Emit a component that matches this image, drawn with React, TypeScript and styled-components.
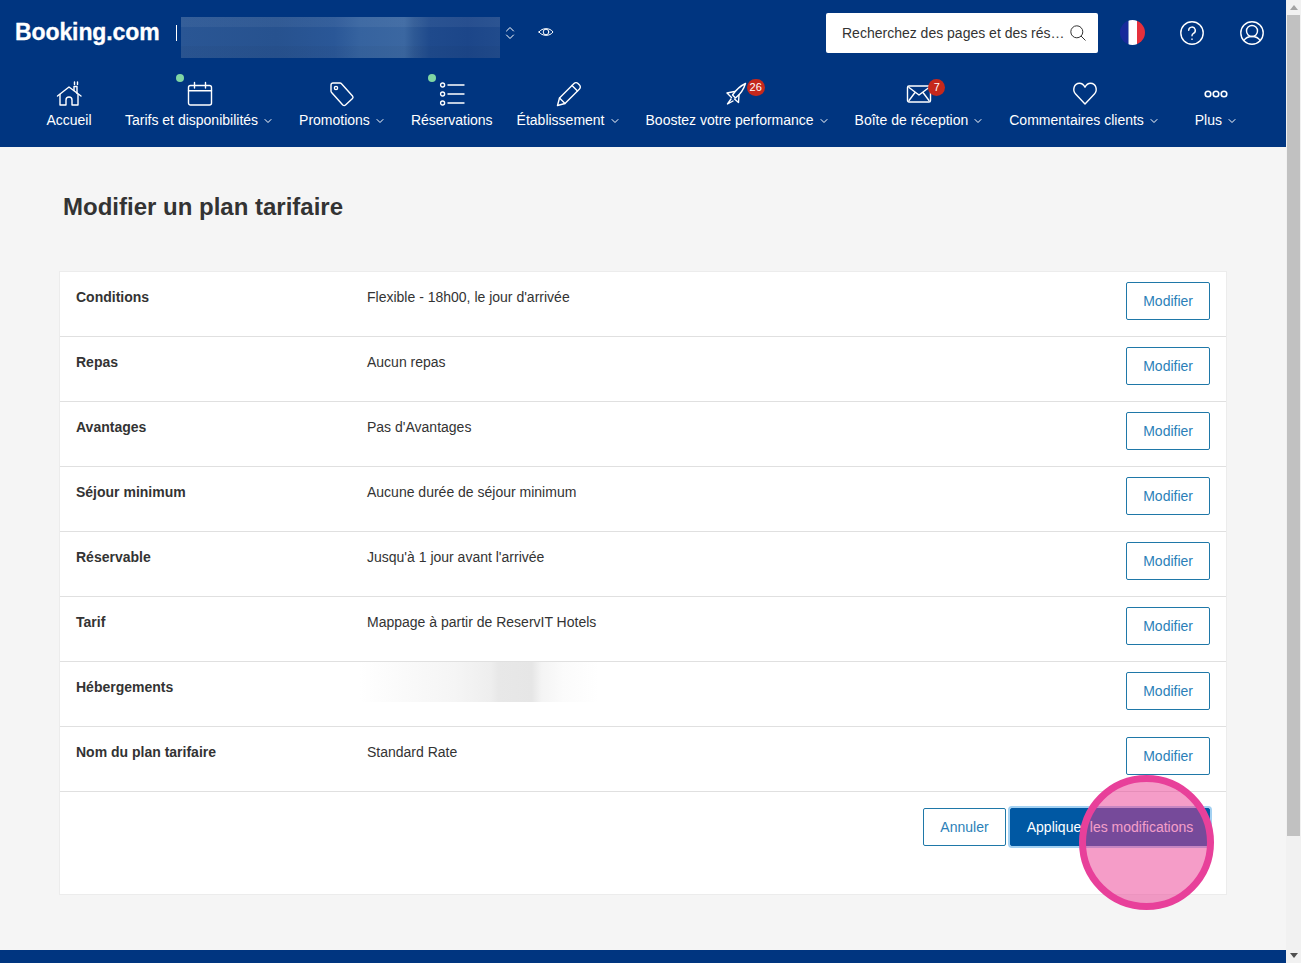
import styled, { createGlobalStyle } from 'styled-components'
import type { ReactNode } from 'react'

const GlobalStyle = createGlobalStyle`
  html, body {
    margin: 0;
    padding: 0;
    height: 100%;
    overflow: hidden;
  }
  body {
    font-family: "Liberation Sans", Arial, sans-serif;
    font-size: 14px;
    color: #333;
  }
  * {
    box-sizing: border-box;
  }
`

const Shell = styled.div`
  position: relative;
  display: flex;
  width: 1301px;
  height: 963px;
  overflow: hidden;
`

const Page = styled.div`
  flex: 1;
  min-width: 0;
  display: flex;
  flex-direction: column;
  background: #f5f5f5;
`

const Header = styled.header`
  height: 147px;
  background: #003580;
  color: #fff;
`

const TopBar = styled.div`
  height: 65px;
  display: flex;
  align-items: center;
  padding-left: 15px;
`

const Logo = styled.div`
  width: 161px;
  margin-top: -1px;
  font-size: 23px;
  font-weight: 700;
  letter-spacing: -0.1px;
  -webkit-text-stroke: 0.3px #fff;
`

const Pipe = styled.span`
  width: 1px;
  height: 16px;
  margin-right: 4px;
  background: #fff;
`

const BlurredName = styled.div`
  width: 319px;
  height: 41px;
  margin-top: 10px;
  background:
    linear-gradient(180deg, rgba(255, 255, 255, 0.05) 0 25%, transparent 25% 70%, rgba(0, 0, 0, 0.03) 70%),
    linear-gradient(
      90deg,
      #2a5694 0%,
      #27528f 30%,
      #2a5797 48%,
      #36639f 56%,
      #3b67a1 70%,
      #2e5995 73%,
      #1f4a8c 78%,
      #1c4689 90%,
      #214b8c 100%
    );
`

const StepperIcon = styled.svg`
  margin-left: 5px;
  width: 10px;
  height: 14px;
`

const EyeIcon = styled.svg`
  margin: -2px 0 0 23px;
  width: 16px;
  height: 14px;
`

const SearchBox = styled.div`
  margin-left: auto;
  width: 272px;
  height: 40px;
  border-radius: 2px;
  background: #fff;
  color: #333;
  display: flex;
  align-items: center;
  justify-content: space-between;
  padding: 0 12px 0 16px;
`

const FlagButton = styled.svg`
  margin-left: 22px;
  width: 25px;
  height: 25px;
`

const RoundIcon = styled.svg`
  margin-left: 35px;
  width: 24px;
  height: 24px;
`

const UserSlot = styled.div`
  display: flex;
  padding: 0 22px 0 1px;
`

const Nav = styled.nav`
  display: flex;
  gap: 24px;
  padding-left: 37px;
  padding-top: 17px;
`

const NavItem = styled.div<{ $menu?: boolean }>`
  min-width: 64px;
  padding-right: ${p => (p.$menu ? '3px' : '0')};
  display: flex;
  flex-direction: column;
  align-items: center;
`

const IconSlot = styled.div<{ $menu?: boolean }>`
  position: relative;
  width: 24px;
  height: 24px;
  margin-left: ${p => (p.$menu ? '2px' : '0')};

  svg {
    display: block;
    overflow: visible;
  }
`

const NavLabel = styled.div`
  margin-top: 5px;
  line-height: 18px;
  white-space: nowrap;
  display: flex;
  align-items: center;
`

const Chevron = styled.svg`
  margin-left: 6px;
  width: 8px;
  height: 6px;
  margin-top: 2px;
`

const GreenDot = styled.span`
  position: absolute;
  left: -12px;
  top: -8px;
  width: 8px;
  height: 8px;
  border-radius: 50%;
  background: #7fd6a4;
`

const Badge = styled.span`
  position: absolute;
  left: 21px;
  top: -3px;
  min-width: 17px;
  height: 17px;
  padding: 0 3px;
  border-radius: 9px;
  background: #c5281c;
  color: #fff;
  font-size: 11px;
  line-height: 16px;
  text-align: center;
`

const Main = styled.main`
  flex: 1;
  padding: 0 59px;
`

const Title = styled.h1`
  margin: 0;
  padding: 45px 4px 0;
  height: 124px;
  font-size: 24px;
  line-height: 30px;
  font-weight: 700;
  color: #333;
`

const Card = styled.section`
  background: #fff;
  border: 1px solid #ececec;
`

const Row = styled.div`
  display: grid;
  grid-template-columns: 291px 1fr auto;
  padding: 10px 16px 16px;
  height: 65px;
  border-bottom: 1px solid #e0e0e0;
`

const RowLabel = styled.div`
  padding-top: 6px;
  line-height: 18px;
  font-weight: 700;
`

const RowValue = styled.div`
  padding-top: 6px;
  line-height: 18px;
`

const BlurredValue = styled.div`
  width: 240px;
  height: 40px;
  margin: -10px 0 0 -8px;
  background: linear-gradient(
    90deg,
    #fff 0%,
    #fbfbfb 15%,
    #f5f5f5 40%,
    #eee 55%,
    #e8e8e8 58%,
    #e6e6e6 72%,
    #f4f4f4 76%,
    #fbfbfb 85%,
    #fff 100%
  );
`

const OutlineButton = styled.button`
  height: 38px;
  min-width: 83px;
  padding: 0 16px;
  background: #fff;
  border: 1px solid #1f78a8;
  border-radius: 2px;
  color: #2b7fb8;
  font: 14px "Liberation Sans", Arial, sans-serif;
`

const Actions = styled.div`
  display: flex;
  justify-content: flex-end;
  gap: 4px;
  padding: 16px 16px 48px;
`

const PrimaryButton = styled.button`
  height: 38px;
  width: 200px;
  padding: 0;
  background: #0058a3;
  border: 1px solid #0058a3;
  border-radius: 2px;
  color: #fff;
  box-shadow: 0 0 0 2px #a3d1f2;
  font: 14px "Liberation Sans", Arial, sans-serif;
`

const FooterStrip = styled.footer`
  height: 13px;
  background: #003580;
`

const Scrollbar = styled.div`
  width: 15px;
  display: flex;
  flex-direction: column;
  align-items: center;
  background: #f1f1f1;
`

const ScrollArrow = styled.svg`
  width: 8px;
  height: 5px;
  margin: 5px 0;
`

const ScrollThumb = styled.div`
  width: 13px;
  height: 821px;
  background: #c1c1c1;
`

const ScrollSpacer = styled.div`
  flex: 1;
`

const ClickMarker = styled.div`
  position: absolute;
  left: 1079px;
  top: 775px;
  width: 135px;
  height: 135px;
  border-radius: 50%;
  border: 7px solid #e8409a;
  background: rgba(235, 60, 145, 0.5);
  pointer-events: none;
`

const stroke = { fill: 'none', stroke: '#fff', strokeWidth: 1.4, strokeLinecap: 'round', strokeLinejoin: 'round' } as const

const HomeIcon = () => (
  <svg width="24" height="24" viewBox="0 0 24 24" {...stroke}>
    <path d="M0.5 14 L12 5 L24 14" />
    <path d="M3 12.5 V23 H9 V18 a3 3 0 0 1 6 0 V23 H21 V12.5" />
    <path d="M17 8.5 V4.5 h3 V11.5" />
    <path d="M17.5 0 v2.5 M20.5 0 v2.5" />
  </svg>
)

const CalendarIcon = () => (
  <svg width="24" height="24" viewBox="0 0 24 24" {...stroke}>
    <rect x="0.5" y="3.5" width="23" height="19.5" rx="2" />
    <path d="M0.5 8.7 H23.5 M6.5 0.5 v5.5 M17.5 0.5 v5.5" />
  </svg>
)

const TagIcon = () => (
  <svg width="24" height="24" viewBox="0 0 24 24" {...stroke}>
    <path d="M3 1 H10 a2 2 0 0 1 1.5 .7 L22.5 14 a2 2 0 0 1 0 2.6 L15.5 23 a2 2 0 0 1 -2.7 0 L1.6 10.5 A2 2 0 0 1 1 9 V3 a2 2 0 0 1 2 -2 Z" />
    <circle cx="6" cy="6" r="1.6" />
  </svg>
)

const ListIcon = () => (
  <svg width="24" height="24" viewBox="0 0 24 24" {...stroke}>
    <circle cx="2.6" cy="3" r="2" />
    <circle cx="2.6" cy="12" r="2" />
    <circle cx="2.6" cy="21" r="2" />
    <path d="M8 3 H24 M8 12 H24 M8 21 H24" />
  </svg>
)

const PencilIcon = () => (
  <svg width="24" height="24" viewBox="0 0 24 24" {...stroke}>
    <path d="M0.5 23.5 L2.5 16 L17 1.5 a2.8 2.8 0 0 1 4 0 l1.5 1.5 a2.8 2.8 0 0 1 0 4 L8 21.5 Z" />
    <path d="M2.5 16 L8 21.5 M15 3.5 L20.5 9" />
  </svg>
)

const RocketIcon = () => (
  <svg width="24" height="24" viewBox="0 0 24 24" {...stroke}>
    <path d="M19.5 1.5 C14 4 10 8 6.5 13 L9.5 16 C14 12.5 17.5 8 19.5 1.5 Z" />
    <path d="M8.5 9.5 L1 11 L5.5 15.5" />
    <path d="M13 13 L12.5 20.5 L8.5 17" />
    <path d="M5 17 L1.5 22 L7 19" />
  </svg>
)

const EnvelopeIcon = () => (
  <svg width="24" height="24" viewBox="0 0 24 24" {...stroke}>
    <rect x="0.5" y="4" width="23" height="16" rx="1.5" />
    <path d="M2 5.5 L12 13 L22 5.5 M2 18.5 L8 10.5 M22 18.5 L16 10.5" />
  </svg>
)

const HeartIcon = () => (
  <svg width="24" height="24" viewBox="0 0 24 24" {...stroke}>
    <path d="M12 22 L2.6 12 C-0.8 8.5 .8 1.2 6.5 1.2 C9.5 1.2 11 3.2 12 5.2 C13 3.2 14.5 1.2 17.5 1.2 C23.2 1.2 24.8 8.5 21.4 12 Z" />
  </svg>
)

const DotsIcon = () => (
  <svg width="24" height="24" viewBox="0 0 24 24" {...stroke} strokeWidth={1.6}>
    <circle cx="4" cy="12" r="2.8" />
    <circle cx="12" cy="12" r="2.8" />
    <circle cx="20" cy="12" r="2.8" />
  </svg>
)

type NavEntry = {
  label: string
  icon: ReactNode
  menu?: boolean
  dot?: boolean
  badge?: string
}

const navEntries: NavEntry[] = [
  { label: 'Accueil', icon: <HomeIcon /> },
  { label: 'Tarifs et disponibilités', icon: <CalendarIcon />, menu: true, dot: true },
  { label: 'Promotions', icon: <TagIcon />, menu: true },
  { label: 'Réservations', icon: <ListIcon />, dot: true },
  { label: 'Établissement', icon: <PencilIcon />, menu: true },
  { label: 'Boostez votre performance', icon: <RocketIcon />, menu: true, badge: '26' },
  { label: 'Boîte de réception', icon: <EnvelopeIcon />, menu: true, badge: '7' },
  { label: 'Commentaires clients', icon: <HeartIcon />, menu: true },
  { label: 'Plus', icon: <DotsIcon />, menu: true },
]

const rows: { label: string; value?: string }[] = [
  { label: 'Conditions', value: "Flexible - 18h00, le jour d'arrivée" },
  { label: 'Repas', value: 'Aucun repas' },
  { label: 'Avantages', value: "Pas d'Avantages" },
  { label: 'Séjour minimum', value: 'Aucune durée de séjour minimum' },
  { label: 'Réservable', value: "Jusqu'à 1 jour avant l'arrivée" },
  { label: 'Tarif', value: 'Mappage à partir de ReservIT Hotels' },
  { label: 'Hébergements' },
  { label: 'Nom du plan tarifaire', value: 'Standard Rate' },
]

export default function App() {
  return (
    <Shell>
      <GlobalStyle />
      <Page>
        <Header>
          <TopBar>
            <Logo>Booking.com</Logo>
            <Pipe />
            <BlurredName />
            <StepperIcon viewBox="0 0 10 14" {...stroke} strokeWidth={1}>
              <path d="M1.5 5 L5 1.5 L8.5 5 M1.5 9 L5 12.5 L8.5 9" />
            </StepperIcon>
            <EyeIcon viewBox="0 0 16 14" {...stroke} strokeWidth={1}>
              <path d="M1 7 C4 2.5 12 2.5 15 7 C12 11.5 4 11.5 1 7 Z" />
              <circle cx="8" cy="7" r="2.8" />
            </EyeIcon>
            <SearchBox>
              <span>Recherchez des pages et des rés…</span>
              <svg width="16" height="16" viewBox="0 0 16 16" fill="none" stroke="#333" strokeWidth="1">
                <circle cx="6.8" cy="6.8" r="6" />
                <path d="M11 11 L15.5 15.5" />
              </svg>
            </SearchBox>
            <FlagButton viewBox="0 0 25 25">
              <clipPath id="flag-clip">
                <circle cx="12.5" cy="12.5" r="12.5" />
              </clipPath>
              <g clipPath="url(#flag-clip)">
                <rect x="0" width="8.5" height="25" fill="#172b9a" />
                <rect x="8.5" width="8.5" height="25" fill="#fff" />
                <rect x="17" width="8" height="25" fill="#e5303c" />
              </g>
            </FlagButton>
            <RoundIcon viewBox="0 0 24 24" {...stroke} strokeWidth={1.4}>
              <circle cx="12" cy="12" r="11.2" />
              <path d="M8.7 9.3 a3.3 3.3 0 1 1 4.8 3 c-1 .6 -1.5 1.2 -1.5 2.4" />
              <path d="M12 18 v.4" />
            </RoundIcon>
            <UserSlot>
              <RoundIcon viewBox="0 0 24 24" {...stroke} strokeWidth={1.4}>
                <circle cx="12" cy="12" r="11.2" />
                <circle cx="12" cy="10" r="5.5" />
                <path d="M4 19.5 C6 16 9 15.5 12 15.5 C15 15.5 18 16 20 19.5" />
              </RoundIcon>
            </UserSlot>
          </TopBar>
          <Nav>
            {navEntries.map(entry => (
              <NavItem key={entry.label} $menu={entry.menu}>
                <IconSlot $menu={entry.menu}>
                  {entry.icon}
                  {entry.dot && <GreenDot />}
                  {entry.badge && <Badge>{entry.badge}</Badge>}
                </IconSlot>
                <NavLabel>
                  {entry.label}
                  {entry.menu && (
                    <Chevron viewBox="0 0 8 6" {...stroke} strokeWidth={1}>
                      <path d="M1 1.5 L4 4.5 L7 1.5" />
                    </Chevron>
                  )}
                </NavLabel>
              </NavItem>
            ))}
          </Nav>
        </Header>
        <Main>
          <Title>Modifier un plan tarifaire</Title>
          <Card>
            {rows.map(row => (
              <Row key={row.label}>
                <RowLabel>{row.label}</RowLabel>
                {row.value ? <RowValue>{row.value}</RowValue> : <BlurredValue />}
                <OutlineButton>Modifier</OutlineButton>
              </Row>
            ))}
            <Actions>
              <OutlineButton>Annuler</OutlineButton>
              <PrimaryButton>Appliquer les modifications</PrimaryButton>
            </Actions>
          </Card>
        </Main>
        <FooterStrip />
      </Page>
      <Scrollbar>
        <ScrollArrow viewBox="0 0 8 5">
          <path d="M4 0 L8 5 H0 Z" fill="#a3a3a3" />
        </ScrollArrow>
        <ScrollThumb />
        <ScrollSpacer />
        <ScrollArrow viewBox="0 0 8 5">
          <path d="M0 0 H8 L4 5 Z" fill="#505050" />
        </ScrollArrow>
      </Scrollbar>
      <ClickMarker />
    </Shell>
  )
}
